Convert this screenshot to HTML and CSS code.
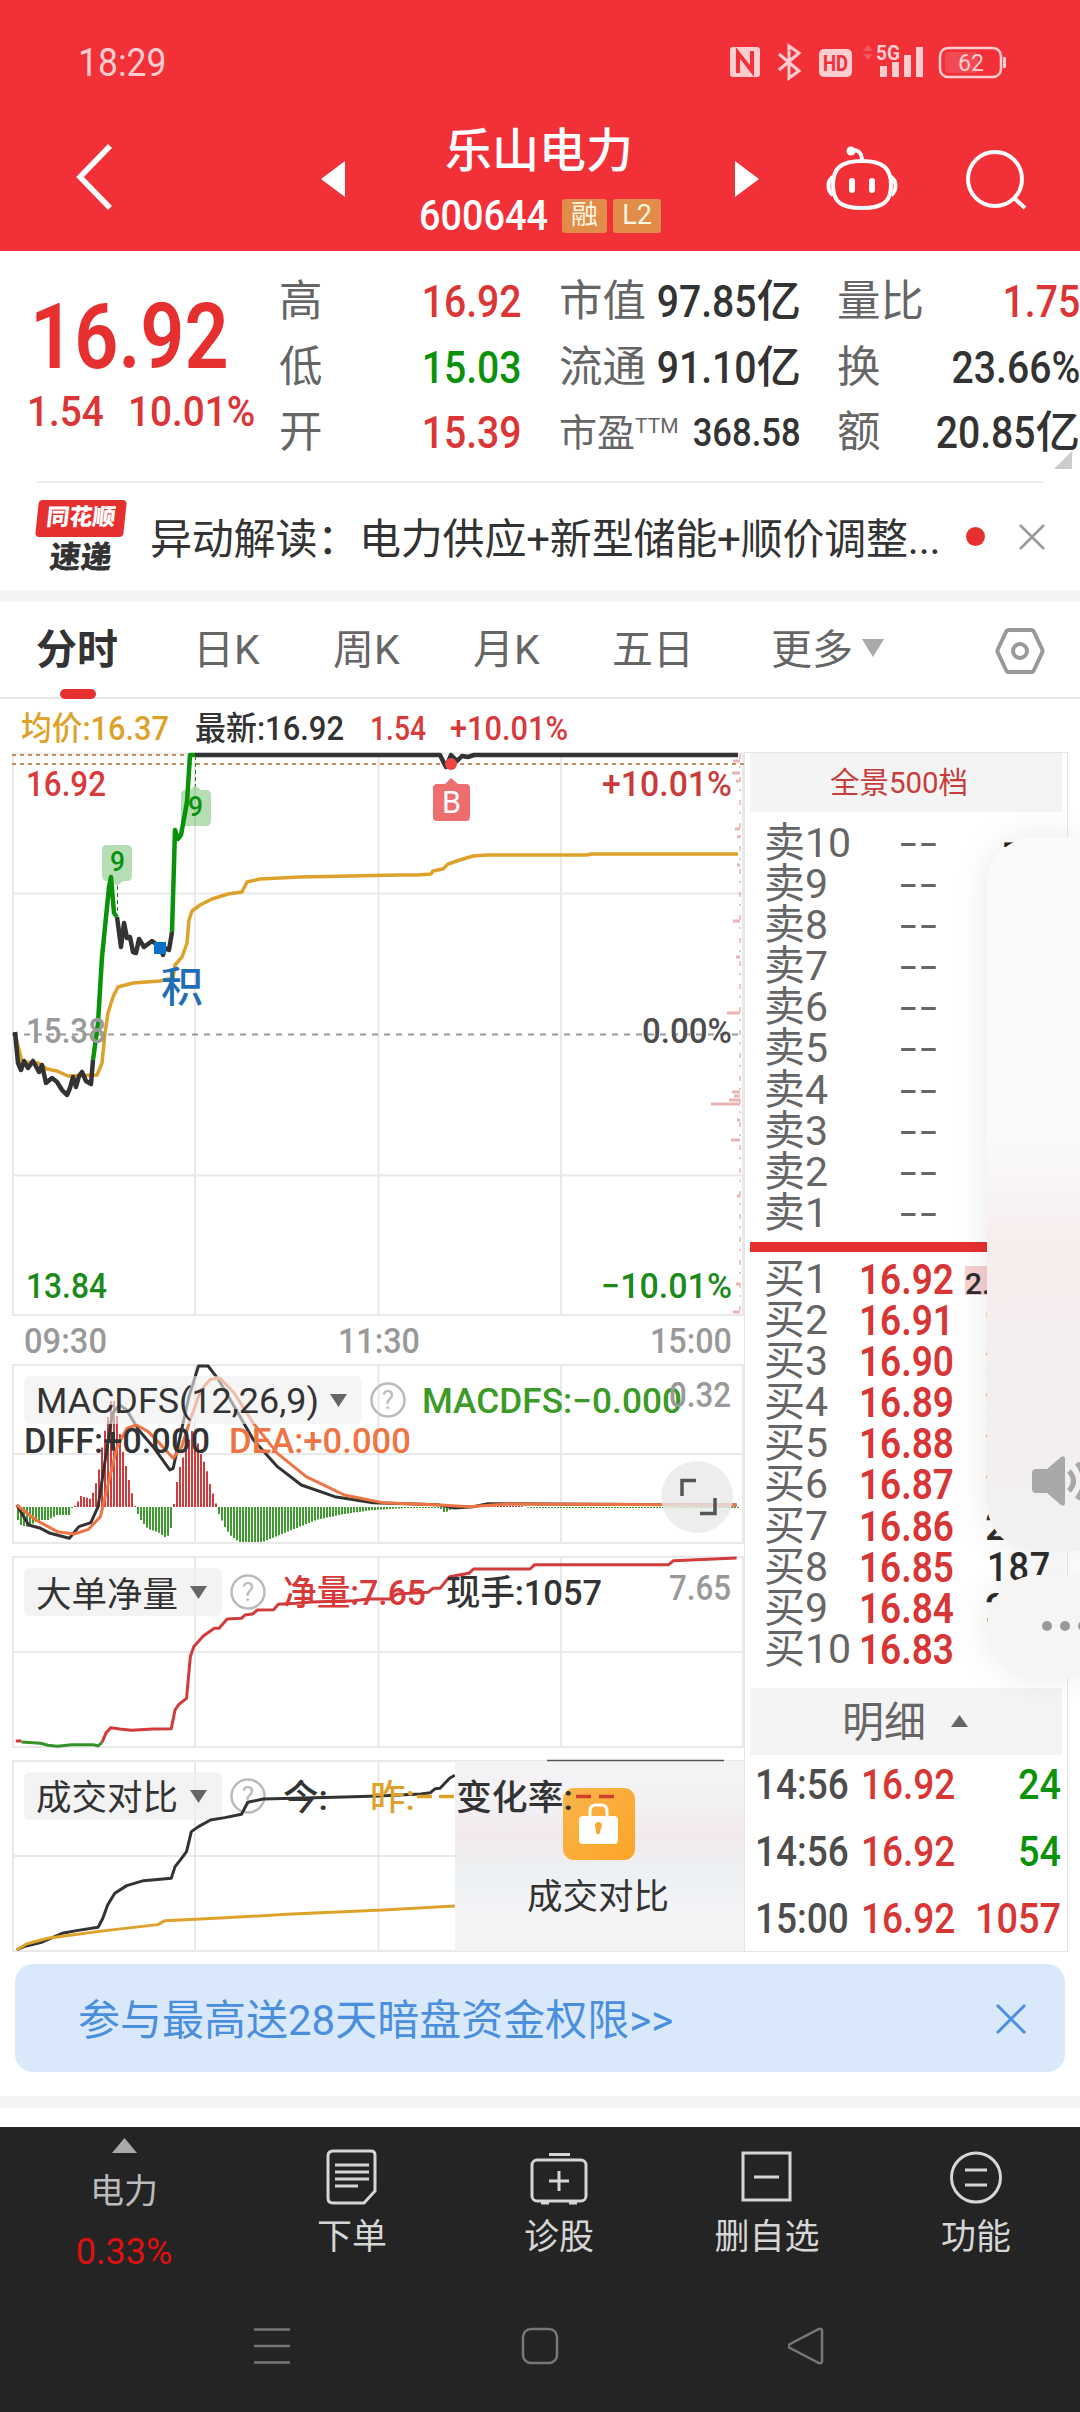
FILE: index.html
```
<!DOCTYPE html>
<html lang="zh-CN">
<head>
    <meta charset="UTF-8">
    <meta name="viewport" content="width=device-width, initial-scale=1.0">
    <title>乐山电力 600644</title>
    <link rel="stylesheet" href="styles.css">
</head>
<body>
    <header class="header">
        <div class="status">
            <span class="clock num">18:29</span>
            <svg class="status-icons" width="280" height="40" viewBox="725 42 280 40">
                <g fill="#ffcdd0">
                    <rect x="730" y="47" width="30" height="30" rx="3"/>
                    <path d="M738 73V53l14 18V51" fill="none" stroke="#f13038" stroke-width="4"/>
                    <path d="M779 54l20 17-10 7V46l10 7-20 17" fill="none" stroke="#ffcdd0" stroke-width="3"/>
                    <rect x="819" y="49" width="33" height="28" rx="5"/>
                    <text x="823" y="71" font-size="22" font-weight="700" fill="#f13038" textLength="25" lengthAdjust="spacingAndGlyphs">HD</text>
                    <path d="M863 51l5-6 5 6zM863 54h10l-5 6z" opacity=".25"/>
                    <text x="876" y="60" font-size="20" font-weight="700" textLength="24" lengthAdjust="spacingAndGlyphs">5G</text>
                    <rect x="880" y="66" width="7" height="11"/>
                    <rect x="892" y="62" width="7" height="15"/>
                    <rect x="904" y="55" width="7" height="22"/>
                    <rect x="916" y="47" width="7" height="30"/>
                    <rect x="940" y="48" width="61" height="29" rx="8" fill="none" stroke="#ffcdd0" stroke-width="2.5"/>
                    <rect x="945" y="52" width="33" height="21" rx="4" opacity=".16"/>
                    <rect x="1003" y="57" width="3" height="11" rx="1"/>
                    <text x="958" y="71" font-size="24" textLength="26" lengthAdjust="spacingAndGlyphs">62</text>
                </g>
            </svg>
        </div>
        <div class="titlebar">
            <svg class="back" width="44" height="70" viewBox="0 0 44 70"><path d="M38 4L8 35l30 31" fill="none" stroke="#fff" stroke-width="5.5"/></svg>
            <svg class="prev" width="24" height="36" viewBox="0 0 24 36"><path d="M24 0v36L0 18z" fill="#fff"/></svg>
            <div class="stock">
                <h1>乐山电力</h1>
                <div class="code"><span class="num">600644</span><i>融</i><i>L2</i></div>
            </div>
            <svg class="next" width="24" height="36" viewBox="0 0 24 36"><path d="M0 0v36l24-18z" fill="#fff"/></svg>
            <svg class="robot" width="74" height="66" viewBox="0 0 74 66" fill="none" stroke="#fff" stroke-width="4">
                <path d="M37 16C16 16 8 23 8 40S16 63 37 63s29-6 29-23S58 16 37 16z"/>
                <path d="M8 32c-6 4-6 14 0 18M66 32c6 4 6 14 0 18M37 16C37 8 34 5 27 5" />
                <circle cx="26" cy="6" r="2.5" fill="#fff"/>
                <path d="M27 36v9M47 36v9" stroke-width="6" stroke-linecap="round"/>
            </svg>
            <svg class="search" width="62" height="64" viewBox="0 0 62 64" fill="none" stroke="#fff" stroke-width="4"><circle cx="30" cy="31" r="27"/><path d="M49 50l11 10"/></svg>
        </div>
    </header>

    <section class="quote">
        <div class="price">
            <b class="num">16.92</b>
            <p><span class="num">1.54</span><span class="num">10.01%</span></p>
        </div>
        <dl>
            <div><dt>高</dt><dd class="num red">16.92</dd></div>
            <div><dt>低</dt><dd class="num green">15.03</dd></div>
            <div><dt>开</dt><dd class="num red">15.39</dd></div>
        </dl>
        <dl>
            <div><dt>市值</dt><dd><span class="num">97.85</span>亿</dd></div>
            <div><dt>流通</dt><dd><span class="num">91.10</span>亿</dd></div>
            <div class="pe"><dt>市盈<sup>TTM</sup></dt><dd class="num">368.58</dd></div>
        </dl>
        <dl>
            <div><dt>量比</dt><dd class="num red">1.75</dd></div>
            <div><dt>换</dt><dd class="num">23.66%</dd></div>
            <div><dt>额</dt><dd><span class="num">20.85</span>亿</dd></div>
        </dl>
        <span class="corner"></span>
    </section>

    <section class="news">
        <div class="express"><span>同花顺</span><em>速递</em></div>
        <p>异动解读：电力供应+新型储能+顺价调整...</p>
        <span class="dot"></span>
        <svg width="26" height="26" viewBox="0 0 26 26"><path d="M1 1l24 24M25 1L1 25" stroke="#999" stroke-width="2.5"/></svg>
    </section>

    <nav class="tabs">
        <a class="active">分时</a>
        <a>日K</a>
        <a>周K</a>
        <a>月K</a>
        <a>五日</a>
        <a>更多<svg width="22" height="18" viewBox="0 0 22 18"><path d="M0 0h22L11 18z" fill="#aaa"/></svg></a>
        <svg class="gear" width="50" height="48" viewBox="0 0 50 48" fill="none" stroke="#999" stroke-width="4"><path d="M14 3h22q2 0 3 2l8 17q1 2 0 4l-8 17q-1 2-3 2H14q-2 0-3-2L3 26q-1-2 0-4l8-17q1-2 3-2z"/><circle cx="25" cy="24" r="7"/></svg>
    </nav>

    <main class="board">
        <div class="charts">
            <svg id="trend" class="chart" width="745" height="662" viewBox="0 699 745 662">
                <g class="legend" font-size="33" font-weight="500">
                    <text x="21" y="740" fill="#dda22a" textLength="148">均价:16.37</text>
                    <text x="195" y="740" fill="#333" textLength="149">最新:16.92</text>
                    <text x="370" y="740" fill="#d83a3a" textLength="56">1.54</text>
                    <text x="450" y="740" fill="#d83a3a" textLength="118">+10.01%</text>
                </g>
                <path class="grid" d="M13 753.500H743V1315H13zM195 754V1315M378.500 754V1315M561 754V1315M13 893.500H743M13 1175.500H743"/>
                <path class="volume-edge" d="M740 754V1310"/>
                <path class="volume" d="M733 761h7M732 773h8M736 781h4M735 829h5M737 837h3M737 865h3M733 921h7M736 957h4M727 1013h13M732 1092h8M734 1096h6M729 1100h11M711 1104h29M737 1120h3M731 1140h9M737 1196h3M736 1284h4M733 1312h7"/>
                <path d="M12 755H190M12 764H744" stroke="#c2905c" stroke-width="2" stroke-dasharray="4 4"/>
                <path d="M12 1034.500H738" stroke="#999" stroke-width="2" stroke-dasharray="6 6"/>
                <polyline class="line avg" points="15,1033 22,1062 38,1063 47,1069 57,1071 68,1076 97,1075 102,1063 105,1033 108,1013 113,997 118,987 133,983 160,981 173,978 175,965 182,957 187,943 189,920 192,911 200,905 212,899 228,894 242,892 247,882 260,879 300,877 400,875 417,875 431,874 433,871 443,869 448,864 460,860 473,856 488,855 587,855 591,854 738,854"/>
                <polyline class="line dark" points="15,1032 18,1063 21,1070 24,1061 28,1068 33,1061 39,1072 42,1065 46,1083 52,1078 57,1082 62,1090 67,1095 70,1088 73,1077 76,1087 79,1076 82,1072 86,1081 91,1084 93,1060"/>
                <polyline class="line dark" points="117,917 121,947 124,923 127,938 130,937 133,952 136,953 139,939 144,947 152,941 160,947 163,955 165,948 169,950 172,932"/>
                <polyline class="line dark" points="195,755 440,755 446,767 451,755 457,761 462,756 468,757 474,755 738,755"/>
                <polyline class="line up" points="93,1060 98,1023 102,957 107,907 109,887 111,877 114,913 117,917"/>
                <polyline class="line up" points="172,932 175,830 178,839 181,835 187,802 190,755 195,755"/>
                <path d="M117.500 886V912M195.500 756V786" stroke="#0a930a" stroke-dasharray="4 3"/>
                <g fill="#0a930a" fill-opacity=".3">
                    <path d="M107 845h20q5 0 5 5v26q0 5-5 5h-4l-6 5-6-5h-4q-5 0-5-5v-26q0-5 5-5z"/>
                    <path d="M186 790h4l5-5 6 5h5q5 0 5 5v26q0 5-5 5h-20q-5 0-5-5v-26q0-5 5-5z"/>
                </g>
                <g fill="#0a930a" font-size="27" font-weight="500">
                    <text x="110" y="871" textLength="15">9</text>
                    <text x="188" y="816" textLength="15">9</text>
                </g>
                <circle cx="451" cy="764" r="6" fill="#e44"/>
                <path d="M437 784h8l6-6 7 6h8q4 0 4 4v29q0 4-4 4h-29q-4 0-4-4v-29q0-4 4-4z" fill="#ee6e70"/>
                <text x="442" y="813" font-size="31" fill="#fff" textLength="19">B</text>
                <rect x="154" y="942" width="12" height="12" fill="#0b6fce"/>
                <text x="161" y="1002" font-size="42" font-weight="500" fill="#1f6db5">积</text>
                <g font-size="35" font-weight="500">
                    <text x="26" y="796" fill="#d83a3a" textLength="80">16.92</text>
                    <text x="602" y="796" fill="#c93c3c" textLength="130">+10.01%</text>
                    <text x="26" y="1043" fill="#999" textLength="80">15.38</text>
                    <text x="642" y="1043" fill="#4d4d4d" textLength="90">0.00%</text>
                    <text x="26" y="1298" fill="#1b8a1b" textLength="81">13.84</text>
                    <text x="601" y="1298" fill="#1b8a1b" textLength="131">−10.01%</text>
                    <g fill="#999">
                        <text x="24" y="1353" textLength="83">09:30</text>
                        <text x="338" y="1353" textLength="82">11:30</text>
                        <text x="650" y="1353" textLength="82">15:00</text>
                    </g>
                </g>
            </svg>

            <svg class="chart" width="745" height="194" viewBox="0 1361 745 194">
                <path class="grid" d="M13 1365H743V1543H13zM195 1365V1543M378.500 1365V1543M561 1365V1543M13 1454H743"/>
                <path id="macd-up" stroke="#d23b3b" stroke-width="2"/>
                <path id="macd-down" stroke="#3f9a30" stroke-width="2"/>
                <g transform="matrix(.4783 0 0 .3333 0 1350)" class="thin">
                    <polyline stroke="#333" points="35,465 60,525 85,535 105,550 145,565 165,530 190,518 205,470 220,330 235,190 250,165 265,180 290,240 320,290 355,360 362,355 375,270 395,140 415,48 435,48 455,85 490,170 530,270 580,350 630,405 700,440 780,458 915,464 950,474 990,470 1020,461 1150,462 1540,465"/>
                    <polyline stroke="#ee7443" points="35,465 75,510 120,545 155,552 185,538 210,500 228,390 245,290 265,235 285,225 310,245 340,290 362,325 380,290 400,200 420,120 440,88 460,85 490,130 530,220 580,310 640,380 720,435 800,458 920,465 980,470 1060,462 1540,465"/>
                </g>
                <rect x="24" y="1376" width="338" height="48" rx="6" fill="#eee" fill-opacity=".6"/>
                <path d="M330 1394h17l-8.500 13z" fill="#666"/>
                <g class="help"><circle cx="388" cy="1400" r="16.500"/><text x="388" y="1409">?</text></g>
                <g font-size="35">
                    <text x="36" y="1413" fill="#333" textLength="283">MACDFS(12,26,9)</text>
                    <text x="422" y="1413" fill="#3c9a26" textLength="260" font-weight="500">MACDFS:−0.000</text>
                    <text x="669" y="1407" fill="#999" textLength="62" font-weight="500">0.32</text>
                    <text x="24" y="1453" fill="#333" textLength="186" font-weight="500">DIFF:+0.000</text>
                    <text x="229" y="1453" fill="#ee7443" textLength="182" font-weight="500">DEA:+0.000</text>
                </g>
                <circle cx="697" cy="1497" r="36" fill="#e8e8e8" fill-opacity=".8"/>
                <path d="M682 1496V1480.500H696M700 1513.500H715V1498" fill="none" stroke="#555" stroke-width="3.500"/>
            </svg>

            <svg class="chart" width="745" height="198" viewBox="0 1555 745 198">
                <path class="grid" d="M13 1557H743V1747H13zM195 1557V1747M378.500 1557V1747M561 1557V1747M13 1652H743"/>
                <rect x="24" y="1568" width="198" height="48" rx="6" fill="#eee" fill-opacity=".7"/>
                <path d="M190 1586h17l-8.500 13z" fill="#666"/>
                <g class="help"><circle cx="248" cy="1592" r="16.500"/><text x="248" y="1601">?</text></g>
                <g transform="matrix(.4783 0 0 .3333 0 1550)" class="thin">
                    <polyline stroke="#35922b" points="45,576 85,580 100,586 120,589 150,584 195,584 205,588 213,578"/>
                    <polyline stroke="#d23b3b" points="213,578 222,548 232,533 250,537 275,541 320,537 358,536 366,480 375,462 390,445 398,320 405,290 425,258 448,235 458,235 475,207 505,205 512,195 528,192 538,180 572,179 582,163 620,160 650,156 740,152 770,147 815,147 830,132 895,127 905,115 920,115 940,80 980,70 990,57 1108,57 1118,44 1398,44 1408,32 1540,24"/>
                    <polyline stroke="#d23b3b" points="33,573 45,573"/>
                </g>
                <g font-size="35.500" font-weight="500">
                    <text x="36" y="1607" fill="#333" textLength="142" font-weight="400">大单净量</text>
                    <text x="283" y="1605" fill="#d83a3a" textLength="143">净量:7.65</text>
                    <text x="446" y="1605" fill="#333" textLength="156">现手:1057</text>
                    <text x="669" y="1600" fill="#999" textLength="62">7.65</text>
                </g>
            </svg>

            <svg class="chart" width="745" height="199" viewBox="0 1753 745 199">
                <defs>
                    <linearGradient id="blur" x1="0" y1="0" x2="0" y2="1">
                        <stop offset="0" stop-color="#f4f3f5"/>
                        <stop offset=".22" stop-color="#f3f1f4"/>
                        <stop offset=".38" stop-color="#f1e9ed"/>
                        <stop offset=".6" stop-color="#edf1f3"/>
                        <stop offset=".8" stop-color="#f4f4f7"/>
                    </linearGradient>
                    <linearGradient id="gold" x1="0" y1="0" x2="1" y2="1">
                        <stop offset="0" stop-color="#f9b54a"/>
                        <stop offset="1" stop-color="#fda428"/>
                    </linearGradient>
                </defs>
                <path class="grid" d="M13 1761H743V1951H13zM195 1761V1951M378.500 1761V1951M13 1856H743"/>
                <rect x="24" y="1772" width="198" height="48" rx="6" fill="#eee" fill-opacity=".7"/>
                <path d="M190 1790h17l-8.500 13z" fill="#666"/>
                <g class="help"><circle cx="248" cy="1796" r="16.500"/><text x="248" y="1805">?</text></g>
                <g transform="matrix(.4783 0 0 .3333 0 1550)" class="thin">
                    <polyline stroke="#333" points="35,1200 50,1190 85,1178 130,1150 160,1142 205,1132 215,1105 225,1065 240,1030 265,1007 300,992 358,985 366,950 378,928 390,905 400,845 415,830 440,810 470,803 505,793 518,757 550,747 720,741 790,738 880,732 900,728 910,716 920,715 940,685 951,676"/>
                    <polyline stroke="#dda22a" points="35,1200 55,1182 100,1165 150,1155 220,1142 330,1124 345,1112 450,1105 600,1093 800,1080 951,1068"/>
                </g>
                <rect x="455" y="1761" width="289" height="190" fill="url(#blur)"/>
                <path d="M547 1760.500H724" stroke="#555" stroke-width="1.500"/>
                <rect x="563" y="1788" width="72" height="72" rx="11" fill="url(#gold)"/>
                <path d="M590 1817v-6q0-6 6-6h5q6 0 6 6v6" fill="none" stroke="#fff" stroke-width="3"/>
                <rect x="579" y="1816" width="39" height="28" rx="4" fill="#fff"/>
                <path d="M595 1826a3.500 3.500 0 1 1 6 2l-1.500 6h-3l-1-6z" fill="#f7a832"/>
                <text x="527" y="1909" font-size="35.500" fill="#333" textLength="142">成交对比</text>
                <g font-size="35.500">
                    <text x="36" y="1810" fill="#333" textLength="142">成交对比</text>
                    <text x="283" y="1810" fill="#333" font-weight="500">今:</text>
                    <text x="370" y="1810" fill="#dda22a" font-weight="500">昨:</text>
                    <text x="456" y="1810" fill="#333" font-weight="500" textLength="117">变化率:</text>
                </g>
                <path d="M417 1796.500h15M439 1796.500h15" stroke="#dda22a" stroke-width="3.500"/>
                <path d="M576 1796.500h15M599 1796.500h15" stroke="#d0402a" stroke-width="3.500"/>
            </svg>
        </div>

        <aside class="book">
            <a class="depth">全景500档</a>
            <ul class="asks">
                <li><span>卖10</span><i>--</i><u>--</u></li>
                <li><span>卖9</span><i>--</i></li>
                <li><span>卖8</span><i>--</i></li>
                <li><span>卖7</span><i>--</i></li>
                <li><span>卖6</span><i>--</i></li>
                <li><span>卖5</span><i>--</i></li>
                <li><span>卖4</span><i>--</i></li>
                <li><span>卖3</span><i>--</i></li>
                <li><span>卖2</span><i>--</i></li>
                <li><span>卖1</span><i>--</i></li>
            </ul>
            <ul class="bids">
                <li><span>买1</span><b class="num">16.92</b><em class="lead">2.</em></li>
                <li><span>买2</span><b class="num">16.91</b><em>9</em></li>
                <li><span>买3</span><b class="num">16.90</b><em>2</em></li>
                <li><span>买4</span><b class="num">16.89</b><em>2</em></li>
                <li><span>买5</span><b class="num">16.88</b><em>2</em></li>
                <li><span>买6</span><b class="num">16.87</b><em>2</em></li>
                <li><span>买7</span><b class="num">16.86</b><em>2</em></li>
                <li><span>买8</span><b class="num">16.85</b><em class="num">187</em></li>
                <li><span>买9</span><b class="num">16.84</b><em>2</em></li>
                <li><span>买10</span><b class="num">16.83</b></li>
            </ul>
            <a class="detail">明细<svg width="17" height="12" viewBox="0 0 17 12"><path d="M0 12h17L8.500 0z" fill="#666"/></svg></a>
            <ul class="trades">
                <li><span class="num">14:56</span><span class="num red">16.92</span><span class="num green">24</span></li>
                <li><span class="num">14:56</span><span class="num red">16.92</span><span class="num green">54</span></li>
                <li><span class="num">15:00</span><span class="num red">16.92</span><span class="num red">1057</span></li>
            </ul>
        </aside>
    </main>

    <section class="promo">
        <div class="banner">
            <span>参与最高送28天暗盘资金权限&gt;&gt;</span>
            <svg width="32" height="32" viewBox="0 0 32 32"><path d="M2 2l28 28M30 2L2 30" stroke="#4a8fe0" stroke-width="3"/></svg>
        </div>
    </section>

    <footer class="toolbar">
        <a class="sector">
            <svg width="25" height="15" viewBox="0 0 25 15"><path d="M0 15h25L12.500 0z" fill="#aaa"/></svg>
            <span>电力</span>
            <b>0.33%</b>
        </a>
        <a>
            <svg width="58" height="58" viewBox="0 0 58 58"><path d="M10 3h38q4 0 4 4v36L41 55H10q-5 0-5-5V8q0-5 5-5z"/><path d="M12 17h34M12 24h34M12 31h34M12 38h23"/></svg>
            <span>下单</span>
        </a>
        <a>
            <svg width="58" height="58" viewBox="0 0 58 58"><rect x="2" y="12" width="54" height="41" rx="5"/><path d="M19 6.500h21M29 23v20M19 33h20M11 55h8M39 55h8"/></svg>
            <span>诊股</span>
        </a>
        <a>
            <svg width="58" height="58" viewBox="0 0 58 58"><rect x="5" y="5" width="47" height="47"/><path d="M16 29h25"/></svg>
            <span>删自选</span>
        </a>
        <a>
            <svg width="58" height="58" viewBox="0 0 58 58"><circle cx="29" cy="29.500" r="24.500"/><path d="M18 22h22M18 37h22"/></svg>
            <span>功能</span>
        </a>
    </footer>
    <div class="sysnav">
        <svg width="40" height="40" viewBox="0 0 40 40"><path d="M2 3.500h36M2 20h36M2 36.500h36"/></svg>
        <svg width="40" height="40" viewBox="0 0 40 40"><rect x="3" y="3" width="34" height="34" rx="8"/></svg>
        <svg width="40" height="40" viewBox="0 0 40 40"><path d="M31 3q3-1 3 2v30q0 3-3 2L2 22q-3-2 0-4z"/></svg>
    </div>

    <div class="volume-panel">
        <svg width="48" height="54" viewBox="0 0 48 54"><path d="M4 15h11L29 3q4-2 4 2v44q0 4-4 2L15 39H4q-4 0-4-4V19q0-4 4-4z" fill="#a8a8a8"/><path d="M37 17q9 10 0 20M45 9q14 18 0 36" fill="none" stroke="#a8a8a8" stroke-width="5"/></svg>
    </div>
    <div class="volume-more"><i></i><i></i><i></i></div>

    <script src="script.js"></script>
</body>
</html>
```
FILE: styles.css
```
* {
    box-sizing: border-box;
    margin: 0;
    padding: 0;
}

body {
    position: relative;
    width: 1080px;
    height: 2412px;
    overflow: hidden;
    background-color: #ffffff;
    color: #333333;
    font-family: Roboto, "Noto Sans CJK SC", sans-serif;
}

i, em {
    font-style: normal;
}

u {
    text-decoration: none;
}

ul {
    list-style: none;
}

svg {
    display: block;
    flex: none;
}

/* narrow figures */
.num {
    display: inline-block;
    font-weight: 500;
    transform: scaleX(0.88);
    transform-origin: left center;
}

.red {
    color: #dc3535;
}

.green {
    color: #0a930a;
}

/* header */
.header {
    height: 251px;
    background-color: #f13038;
    color: #ffffff;
}

.status {
    display: flex;
    justify-content: space-between;
    padding: 42px 75px 0 78px;
    height: 82px;
}

.status-icons {
    overflow: visible;
}

.clock {
    font-size: 39px;
    font-weight: 400;
    line-height: 42px;
    color: #ffcdd0;
    transform: scaleX(0.91);
}

.titlebar {
    display: flex;
    align-items: flex-start;
    height: 169px;
    padding-left: 72px;
}

.back {
    margin-top: 60px;
}

.prev {
    margin: 79px 0 0 205px;
}

.stock {
    width: 390px;
    padding-top: 38px;
    text-align: center;
}

.stock h1 {
    margin-left: -2px;
    font-size: 47px;
    font-weight: 500;
    line-height: 61px;
}

.code {
    display: flex;
    align-items: center;
    height: 34px;
    margin: 18px 0 0 74px;
    font-size: 42px;
    line-height: 34px;
}

.code .num {
    width: 143px;
    text-align: left;
    transform: scaleX(0.9);
}

.code i {
    width: 45px;
    height: 34px;
    margin-right: 6px;
    border-radius: 3px;
    background-color: #e28c4a;
    font-size: 27px;
    line-height: 33px;
    color: #fff6e0;
}

.code i:last-child {
    width: 48px;
}

.next {
    margin-top: 79px;
}

.robot {
    margin: 63px 0 0 66px;
}

.search {
    margin: 66px 0 0 66px;
}

/* quote */
.quote {
    position: relative;
    display: grid;
    grid-template-columns: 279px 243px 279px 242px;
    height: 232px;
    padding-top: 18px;
}

.quote::after {
    content: "";
    position: absolute;
    left: 36px;
    right: 36px;
    bottom: 0;
    height: 2px;
    background-color: #eeeeee;
}

.price {
    padding: 21px 0 0 30px;
    color: #e63030;
}

.price b {
    font-size: 91px;
    line-height: 94px;
    font-weight: 600;
    transform: scaleX(0.85);
}

.price p {
    display: flex;
    font-size: 43px;
    line-height: 60px;
    margin: -3px 0 0 -3px;
    color: #dc3535;
}

.price p .num {
    width: 101px;
    transform: scaleX(0.9);
}

.quote dl > div {
    display: flex;
    justify-content: space-between;
    height: 65.5px;
    line-height: 66px;
}

.quote dl:nth-of-type(2) {
    padding-left: 37px;
}

.quote dl:nth-of-type(3) {
    padding-left: 36px;
    width: 279px;
}

.quote dt {
    font-size: 43.5px;
    color: #666666;
    white-space: nowrap;
}

.quote dd {
    display: flex;
    justify-content: flex-end;
    font-size: 44.5px;
    font-weight: 500;
    white-space: nowrap;
    min-width: 0;
}

.quote dd,
.quote dd .num {
    transform-origin: right center;
}

.quote .pe dt {
    font-size: 38px;
}

.quote .pe dd {
    font-size: 38px;
    transform: scaleX(0.91);
}

.quote sup {
    font-size: 21px;
    line-height: 0;
    vertical-align: 13px;
}

.corner {
    position: absolute;
    left: 1054px;
    top: 200px;
    border-left: 18px solid transparent;
    border-bottom: 18px solid #cccccc;
}

/* news */
.news {
    display: flex;
    align-items: center;
    height: 119px;
    padding-left: 37px;
    border-bottom: 12px solid #f4f4f4;
}

.express {
    width: 88px;
    margin-right: 25px;
    font-weight: 900;
    line-height: 36px;
    text-align: center;
}

.express span,
.express em {
    display: block;
    transform: skewX(-6deg);
}

.express span {
    height: 37px;
    border-radius: 4px;
    background-color: #e63030;
    color: #ffffff;
    font-size: 23px;
}

.express em {
    font-size: 31px;
    padding-top: 3px;
    height: 36px;
}

.news p {
    width: 816px;
    padding-bottom: 2px;
    font-size: 42px;
    letter-spacing: -0.2px;
    white-space: nowrap;
}

.dot {
    width: 19px;
    height: 19px;
    margin-right: 34px;
    border-radius: 50%;
    background-color: #e63030;
}

/* period tabs */
.tabs {
    display: grid;
    grid-template-columns: 157px 140px 140px 139px 159px 224px 50px;
    align-items: center;
    height: 97px;
    padding-left: 36px;
    border-bottom: 2px solid #e8e8e8;
    font-size: 41px;
    line-height: 97px;
    color: #666666;
}

.tabs .active {
    position: relative;
    font-weight: 700;
    color: #333333;
}

.tabs .active::after {
    content: "";
    position: absolute;
    left: 24px;
    bottom: 0;
    width: 36px;
    height: 10px;
    border-radius: 5px;
    background-color: #e63030;
}

.tabs a svg {
    display: inline-block;
    margin-left: 9px;
    vertical-align: 7px;
}

/* charts */
.board {
    display: grid;
    grid-template-columns: 744px 324px;
    height: 1253px;
}

.grid {
    fill: none;
    stroke: #e9e9e9;
    stroke-width: 2;
}

.line {
    fill: none;
    stroke-width: 4.5;
    stroke-linejoin: round;
}

.avg {
    stroke: #dda22a;
    stroke-width: 3.5;
}

.dark {
    stroke: #333333;
}

.up {
    stroke: #0a930a;
}

.volume,
.volume-edge {
    stroke: #e8b4b4;
    stroke-width: 3;
}

.volume-edge {
    stroke-width: 1.5;
    stroke-dasharray: 5 7 2 9;
}

.thin polyline {
    fill: none;
    stroke-width: 3;
    stroke-linejoin: round;
    vector-effect: non-scaling-stroke;
}

.chart text {
    white-space: pre;
}

.help circle {
    fill: none;
    stroke: #bbbbbb;
    stroke-width: 2.5;
}

.help text {
    font-size: 26px;
    fill: #bbbbbb;
    text-anchor: middle;
}

/* order book */
.book {
    height: 1200px;
    margin-top: 53px;
    padding-left: 5px;
    border: 1px solid #e5e5e5;
}

.depth,
.detail {
    display: block;
    width: 312px;
    background-color: #f4f4f4;
    text-align: center;
}

.depth {
    height: 59px;
    padding: 0 24px 0 10px;
    color: #c83c3c;
    font-size: 29.5px;
    line-height: 60px;
}

.asks {
    width: 312px;
    height: 440px;
    padding-top: 11px;
    border-bottom: 10px solid #e63030;
}

.book .asks li,
.book .bids li {
    display: grid;
    grid-template-columns: 95px 106px 120px;
    height: 41.1px;
    padding-left: 14px;
    font-size: 41px;
    line-height: 41px;
    color: #666666;
    white-space: nowrap;
}

.asks i {
    padding-left: 41px;
    letter-spacing: 2.5px;
    transform: scaleX(1.47);
    transform-origin: 41px center;
}

.asks u {
    padding-left: 37px;
    font-weight: 700;
    color: #222222;
}

.bids {
    height: 436px;
    padding-top: 7px;
}

.bids b {
    color: #d83535;
    font-weight: 600;
    font-size: 42px;
}

.bids em {
    padding-left: 20px;
    color: #2d2d2d;
    font-weight: 500;
}

.bids em.num {
    padding-left: 25px;
    letter-spacing: 1px;
}

.bids .lead {
    height: 29px;
    margin-top: 7px;
    padding-left: 0;
    background-color: #f7d0d0;
    font-size: 30px;
    line-height: 36px;
}

.detail {
    display: flex;
    align-items: center;
    justify-content: center;
    height: 67px;
    font-size: 42px;
    line-height: 64px;
    padding-top: 3px;
    color: #666666;
}

.detail svg {
    margin: -4px 2px 0 25px;
}

.trades li {
    display: grid;
    grid-template-columns: 106px 110px 90px;
    height: 67px;
    padding-left: 5px;
    font-size: 42px;
    line-height: 59px;
    color: #4d4d4d;
}

.trades li .red {
    color: #d83535;
}

.trades li .green {
    color: #0a930a;
}

.trades li span:last-child {
    display: flex;
    justify-content: flex-end;
    transform: scaleX(0.9);
    transform-origin: right center;
}

/* promo */
.promo {
    height: 175px;
    padding: 12px 15px 0;
}

.banner {
    display: flex;
    align-items: center;
    justify-content: space-between;
    height: 108px;
    padding: 0 38px 3px 63px;
    border-radius: 18px;
    background-color: #dae8fb;
    color: #4a8fdd;
    font-size: 42px;
}

.banner svg {
    margin-top: 4px;
}

.promo::after {
    content: "";
    display: block;
    height: 12px;
    margin: 24px -15px 0;
    background-color: #f4f4f4;
}

/* bottom bars */
.toolbar {
    display: grid;
    grid-template-columns: 248px 208px 206px 210px 208px;
    height: 153px;
    background-color: #242424;
    color: #d6d6d6;
    font-size: 35px;
    line-height: 48px;
}

.toolbar a {
    display: flex;
    flex-direction: column;
    align-items: center;
    padding-top: 21px;
}

.toolbar a svg {
    fill: none;
    stroke: #d6d6d6;
    stroke-width: 3;
}

.toolbar a span {
    margin-top: 8px;
}

.toolbar .sector {
    padding-top: 11px;
}

.toolbar .sector svg {
    stroke: none;
}

.toolbar .sector span {
    margin-top: 14px;
    font-size: 34px;
    color: #bbbbbb;
}

.sector b {
    margin-top: 13px;
    color: #dd1111;
    font-size: 36px;
    font-weight: 400;
}

.sysnav {
    display: flex;
    justify-content: center;
    gap: 228px;
    height: 132px;
    padding-top: 46px;
    background-color: #242424;
}

.sysnav svg {
    fill: none;
    stroke: #777777;
    stroke-width: 2.5;
}

/* floating volume panel */
.volume-panel,
.volume-more {
    position: absolute;
    left: 987px;
    width: 93px;
    overflow: hidden;
    box-shadow: 0 0 36px rgba(0, 0, 0, 0.09);
}

.volume-panel {
    top: 837px;
    height: 714px;
    padding: 617px 0 0 45px;
    border-radius: 48px 0 0 48px;
    background: linear-gradient(#fbfbfb 0%, #fafafa 42%, #f7eded 58%, #f3eeee 75%, #f3f1f1 100%);
}

.volume-more {
    display: flex;
    align-items: center;
    gap: 8px;
    top: 1575px;
    height: 102px;
    padding-left: 55px;
    border-radius: 51px 0 0 51px;
    background-color: #f7f4f4;
}

.volume-more i {
    flex: none;
    width: 10px;
    height: 10px;
    border-radius: 50%;
    background-color: #999999;
}
```
FILE: script.js
```
// histogram heights, [x, y] against the zero line, interpolated for every minute
const macd = [
    [16, 5], [19, 17], [26, 20], [34, 16], [41, 13], [48, 13], [57, 8], [69, 8], [72, 1],
    [76, -2], [81, -11], [91, -8], [98, -30], [103, -67], [108, -90], [112, -111], [115, -103],
    [120, -73], [123, -55], [129, -27], [134, -5], [136, 3], [141, 13], [148, 22], [158, 25],
    [165, 30], [170, 28], [173, 7], [175, -13], [179, -37], [187, -62], [192, -76], [197, -67],
    [201, -53], [206, -40], [210, -23], [215, -7], [219, 7], [225, 20], [230, 28], [239, 35],
    [263, 35], [287, 25], [316, 13], [344, 7], [373, 3], [407, 1], [440, 1], [445, 6],
    [450, 3], [457, 1], [478, -1], [521, -1], [531, 1], [740, 1]
];

function valueAt(x) {
    for (let i = 1; i < macd.length; i++) {
        if (x <= macd[i][0]) {
            const [x0, y0] = macd[i - 1];
            const [x1, y1] = macd[i];
            return y0 + (y1 - y0) * (x - x0) / (x1 - x0);
        }
    }
    return 0;
}

let up = '';
let down = '';
for (let x = 18; x < 740; x += 3) {
    const v = valueAt(x);
    const bar = `M${x} 1507v${v.toFixed(1)}`;
    if (v < 0) {
        up += bar;
    } else {
        down += bar;
    }
}
document.getElementById('macd-up').setAttribute('d', up);
document.getElementById('macd-down').setAttribute('d', down);

// squeeze every label into its own width
document.querySelectorAll('.chart text[textLength]').forEach(function (label) {
    label.setAttribute('lengthAdjust', 'spacingAndGlyphs');
});
```
